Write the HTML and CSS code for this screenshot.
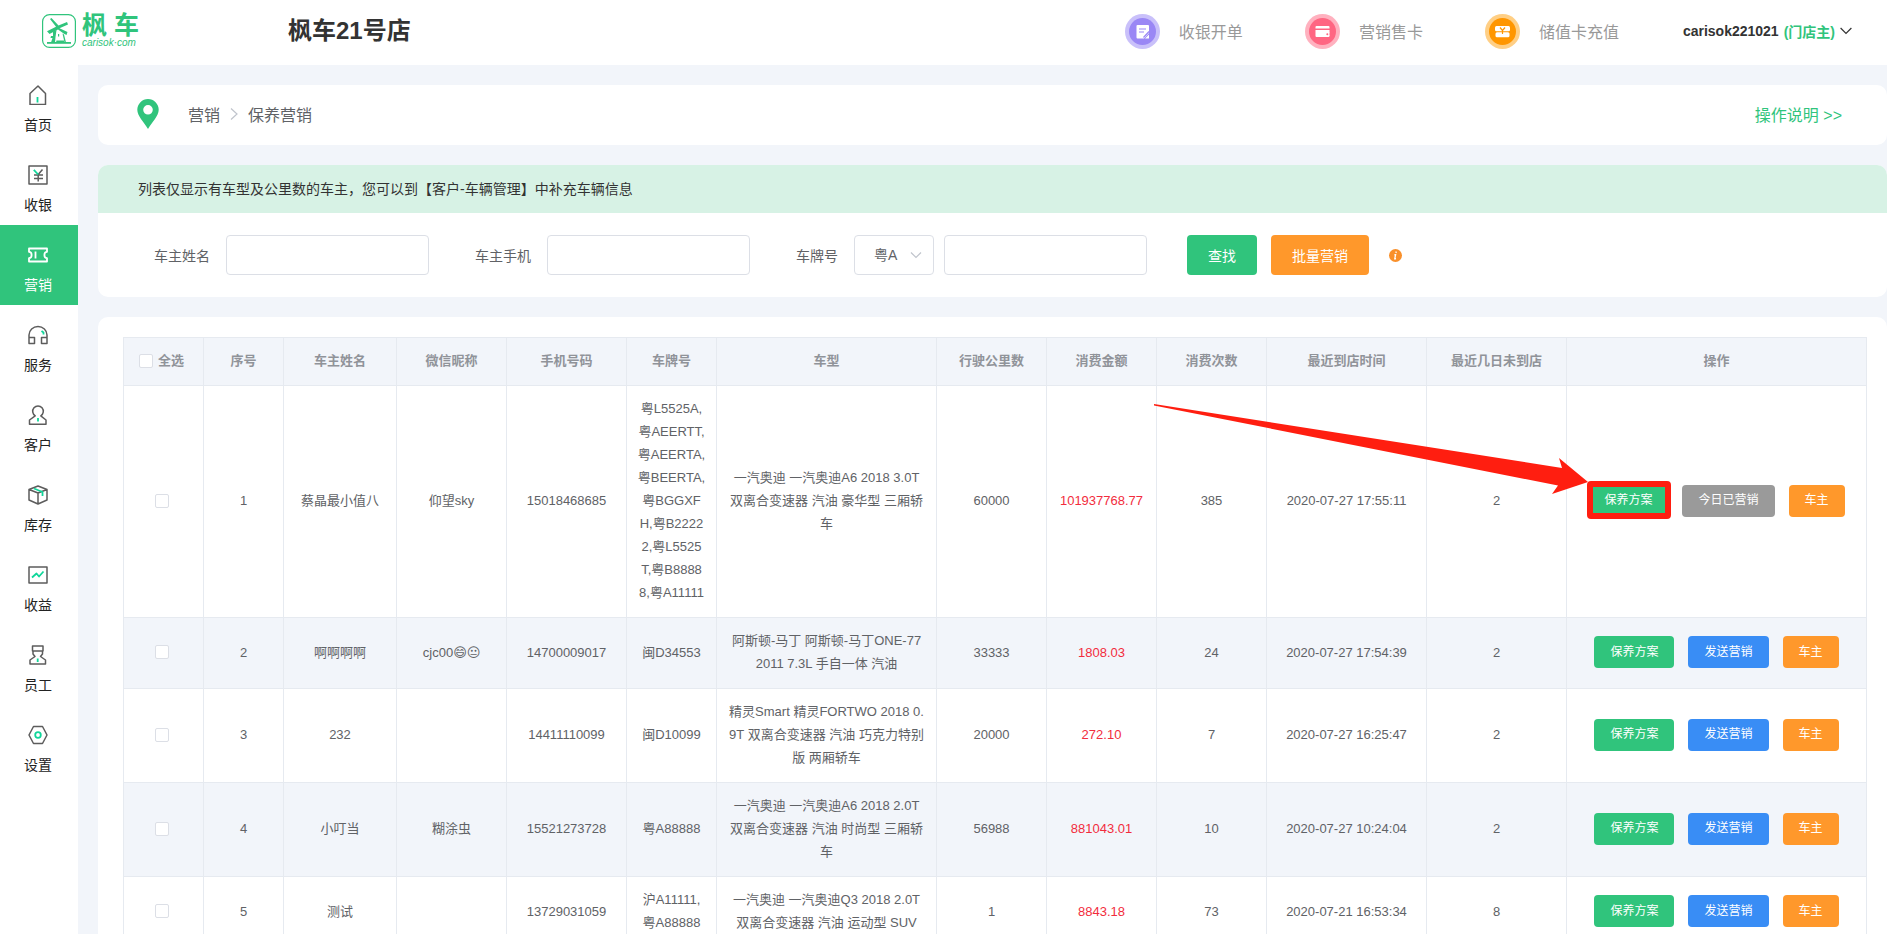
FILE: index.html
```html
<!DOCTYPE html>
<html lang="zh-CN">
<head>
<meta charset="utf-8">
<title>保养营销</title>
<link rel="stylesheet" href="styles.css">
</head>
<body>
<div class="app">
  <header class="topbar">
    <a class="logo" href="#">
      <svg class="logo-mark" viewBox="0 0 34 34" fill="#30c47c">
        <rect x="0.6" y="0.6" width="32.8" height="32.8" rx="7" fill="none" stroke="#30c47c" stroke-width="1.2"/>
        <path d="M8 5 L9.500 4 L16.500 11.500 L25 8 L26 10.500 L17.500 14.200 L25.500 18 L24.500 21 L22 19.800 L16 15.500 L7.500 20 L5 17.200 L14 12.700 Z"/>
        <path d="M11 17.500 L14.500 16 L13.500 23 L13 28.500 L9 28.500 L10.500 24 L8.500 24 L9 22 L11 22 Z"/>
        <path d="M20.500 19.500 L22 20.500 L24 28.500 L22.500 28.500 Z"/>
        <path d="M14 28.500 L14.500 26.500 L22 26.500 L22 28.500 Z"/>
        <path d="M5 28 H29 V29.800 H5 Z"/>
        <rect x="16" y="20" width="1.200" height="2.500"/>
      </svg>
      <span class="logo-words">
        <span class="logo-cn">枫<span>车</span></span>
        <span class="logo-en">carisok·com</span>
      </span>
    </a>
    <h1 class="shop">枫车21号店</h1>
    <nav class="quick">
      <a href="#"><svg class="round" viewBox="0 0 35 35"><circle cx="17.500" cy="17.500" r="17.500" fill="#c9c0fa"/><circle cx="17.500" cy="17.500" r="13.500" fill="#9a87f5"/><path d="M12.500 11h10.500q1 0 1 1v7l-5 5.500h-6.500q-1 0-1-1v-11.500q0-1 1-1z" fill="#fff"/><path d="M14 15h7M14 18h5M18.500 23.500l5.500-6" stroke="#9a87f5" stroke-width="1.200"/><path d="M20 24.500h4v-4z" fill="#fff"/></svg><span>收银开单</span></a>
      <a href="#"><svg class="round" viewBox="0 0 35 35"><circle cx="17.500" cy="17.500" r="17.500" fill="#ffb1bf"/><circle cx="17.500" cy="17.500" r="13.500" fill="#ff6682"/><path d="M11.500 12h12q1 0 1 1v1.500h-14v-1.500q0-1 1-1zM10.500 16h14v2.500h-4v3h4v0.500q0 1-1 1h-12q-1 0-1-1z" fill="#fff"/><rect x="20" y="18" width="4.500" height="4" fill="#fff"/><circle cx="22.300" cy="20.300" r="1" fill="#ff6682"/></svg><span>营销售卡</span></a>
      <a href="#"><svg class="round" viewBox="0 0 35 35"><circle cx="17.500" cy="17.500" r="17.500" fill="#ffcf85"/><circle cx="17.500" cy="17.500" r="13.500" fill="#ff9600"/><rect x="10" y="12" width="15" height="5.200" rx="1.500" fill="#fff"/><rect x="10.500" y="18.200" width="14" height="5" rx="1.500" fill="#fff"/><path d="M15 13.500l2.500 3 2.500-3M17.500 16.500v3.500" fill="none" stroke="#ff9600" stroke-width="1.200"/></svg><span>储值卡充值</span></a>
    </nav>
    <button class="account" type="button">carisok221021 <span class="role">(门店主)</span><svg class="caret" viewBox="0 0 10 10"><path d="M0.500 2.500 L5 7 L9.500 2.500" fill="none" stroke="#333"/></svg></button>
  </header>

  <nav class="sidebar">
    <a href="#"><svg viewBox="0 0 20 20"><path d="M2 8.500 L10 1 L17.500 8.500 V19.500 H2 Z"/><path class="hi" d="M9.500 12v5.500"/></svg>首页</a>
    <a href="#"><svg viewBox="0 0 20 20"><path d="M1 1h18v18H1zM6 10h9M6 13.500h9M10.200 9v7.500M10.200 9.500 L14.500 4.500"/><path class="hi" d="M5.800 4.800 L10.200 9.500"/></svg>收银</a>
    <a class="active" href="#"><svg viewBox="0 0 20 20"><path d="M1 3.500h18v3.300q-2.600 0-2.600 3.200t2.600 3.200v3.300H1v-3.300q2.600 0 2.600-3.200T1 6.800z"/><path class="hi" d="M7.500 6.500v7"/></svg>营销</a>
    <a href="#"><svg viewBox="0 0 20 20"><path d="M1 18v-8a9 8.500 0 0 1 18 0v8M1 12.500h5.500V18.500H1zM13.500 12.500H19V18.500h-5.500z"/><path class="hi" d="M13.500 6l2 1.500v2"/></svg>服务</a>
    <a href="#"><svg viewBox="0 0 20 20"><path d="M7.200 10.800a5.300 5.300 0 1 1 5.600 0l5.200 4.200v4.200H1.500v-4.200z"/><path class="hi" d="M10 13v3.500"/></svg>客户</a>
    <a href="#"><svg viewBox="0 0 20 20"><path d="M10 1l9 3.500v10.500l-9 4-9-4V4.500zM1 4.500l9 3.500 9-3.500M10 8v11"/><path class="hi" d="M6 3.500l8.500 3.500v4"/></svg>库存</a>
    <a href="#"><svg viewBox="0 0 20 20"><path d="M1 2h18v16H1z"/><path class="hi" d="M4 12.500l4.500-4 2.500 3 4.500-5"/></svg>收益</a>
    <a href="#"><svg viewBox="0 0 20 20"><path d="M4.500 1h10.500v5h-10.500zM5 6v3l2 2.500L2 15v4h15.500v-4l-5-3.500 2-2.500V6"/><path class="hi" d="M9.700 13.500v3.500"/></svg>员工</a>
    <a href="#"><svg viewBox="0 0 20 20"><path d="M5.500 1.500h9L19 10l-4.500 8.500h-9L1 10z"/><circle class="hi" cx="10" cy="10" r="2.800"/></svg>设置</a>
  </nav>

  <main class="main">
    <section class="card crumbs">
      <svg class="pin" viewBox="0 0 22 30"><path fill-rule="evenodd" fill="#30c47c" d="M11 0a10.700 10.700 0 0 1 10.700 10.700C21.700 17 15 23 11 30 7 23 0.300 17 0.300 10.700A10.700 10.700 0 0 1 11 0zm0 6a4.800 4.800 0 1 0 0 9.600A4.800 4.800 0 0 0 11 6z"/></svg>
      <a href="#">营销</a>
      <svg class="sep" viewBox="0 0 8 12"><path d="M1 0.500 L7 6 L1 11.500" fill="none" stroke="#c0c4cc" stroke-width="1.200"/></svg>
      <span>保养营销</span>
      <a class="help" href="#">操作说明 &gt;&gt;</a>
    </section>

    <section class="card">
      <p class="notice">列表仅显示有车型及公里数的车主，您可以到【客户-车辆管理】中补充车辆信息</p>
      <form class="filters">
        <div class="field"><label for="owner">车主姓名</label><input id="owner" type="text"></div>
        <div class="field"><label for="phone">车主手机</label><input id="phone" type="text"></div>
        <div class="field plate">
          <label for="plate">车牌号</label>
          <span class="region"><select aria-label="车牌归属地"><option>粤A</option></select><svg viewBox="0 0 12 12"><path d="M1 3.500 L6 8.500 L11 3.500" fill="none" stroke="#c0c4cc" stroke-width="1.200"/></svg></span>
          <input id="plate" type="text">
        </div>
        <button class="btn search" type="button">查找</button>
        <button class="btn bulk" type="button">批量营销</button>
        <svg class="info" viewBox="0 0 12 12"><circle cx="6" cy="6" r="6" fill="#f9902b"/><path d="M6.700 2.300l-0.300 1.400M5 5.300h1.100l-0.800 3.700h1.200" fill="none" stroke="#fff" stroke-width="1.200"/></svg>
      </form>
    </section>

    <section class="card list">
      <table class="grid">
        <colgroup><col class="w80"><col class="w80"><col class="w113"><col class="w110"><col class="w120"><col class="w90"><col class="w220"><col class="w110"><col class="w110"><col class="w110"><col class="w160"><col class="w140"><col></colgroup>
        <thead>
          <tr><th><label class="all"><input type="checkbox">全选</label></th><th>序号</th><th>车主姓名</th><th>微信昵称</th><th>手机号码</th><th>车牌号</th><th>车型</th><th>行驶公里数</th><th>消费金额</th><th>消费次数</th><th>最近到店时间</th><th>最近几日未到店</th><th>操作</th></tr>
        </thead>
        <tbody>
          <tr>
            <td><input type="checkbox" aria-label="选择 1"></td><td>1</td><td>蔡晶最小值八</td><td>仰望sky</td><td>15018468685</td>
            <td>粤L5525A,<br>粤AEERTT,<br>粤AEERTA,<br>粤BEERTA,<br>粤BGGXF<br>H,粤B2222<br>2,粤L5525<br>T,粤B8888<br>8,粤A11111</td>
            <td>一汽奥迪 一汽奥迪A6 2018 3.0T<br>双离合变速器 汽油 豪华型 三厢轿<br>车</td>
            <td>60000</td><td class="money">101937768.77</td><td>385</td><td>2020-07-27 17:55:11</td><td>2</td>
            <td><div class="ops"><span class="marked"><button class="btn small plan" type="button">保养方案</button><svg class="arrow" viewBox="0 0 434 92"><path fill="#ff1e10" d="M0 1 L408 65 L405 55 L434 79 L398 91 L404 82.500 L0 2.500 Z"/></svg></span><button class="btn small done" type="button">今日已营销</button><button class="btn small owner" type="button">车主</button></div></td>
          </tr>
          <tr>
            <td><input type="checkbox" aria-label="选择 2"></td><td>2</td><td>啊啊啊啊</td><td>cjc00<span class="emoji">😄😐</span></td><td>14700009017</td><td>闽D34553</td>
            <td>阿斯顿-马丁 阿斯顿-马丁ONE-77<br>2011 7.3L 手自一体 汽油</td>
            <td>33333</td><td class="money">1808.03</td><td>24</td><td>2020-07-27 17:54:39</td><td>2</td>
            <td><div class="ops"><button class="btn small plan" type="button">保养方案</button><button class="btn small send" type="button">发送营销</button><button class="btn small owner" type="button">车主</button></div></td>
          </tr>
          <tr>
            <td><input type="checkbox" aria-label="选择 3"></td><td>3</td><td>232</td><td></td><td>14411110099</td><td>闽D10099</td>
            <td>精灵Smart 精灵FORTWO 2018 0.<br>9T 双离合变速器 汽油 巧克力特别<br>版 两厢轿车</td>
            <td>20000</td><td class="money">272.10</td><td>7</td><td>2020-07-27 16:25:47</td><td>2</td>
            <td><div class="ops"><button class="btn small plan" type="button">保养方案</button><button class="btn small send" type="button">发送营销</button><button class="btn small owner" type="button">车主</button></div></td>
          </tr>
          <tr>
            <td><input type="checkbox" aria-label="选择 4"></td><td>4</td><td>小叮当</td><td>糊涂虫</td><td>15521273728</td><td>粤A88888</td>
            <td>一汽奥迪 一汽奥迪A6 2018 2.0T<br>双离合变速器 汽油 时尚型 三厢轿<br>车</td>
            <td>56988</td><td class="money">881043.01</td><td>10</td><td>2020-07-27 10:24:04</td><td>2</td>
            <td><div class="ops"><button class="btn small plan" type="button">保养方案</button><button class="btn small send" type="button">发送营销</button><button class="btn small owner" type="button">车主</button></div></td>
          </tr>
          <tr>
            <td><input type="checkbox" aria-label="选择 5"></td><td>5</td><td>测试</td><td></td><td>13729031059</td><td>沪A11111,<br>粤A88888</td>
            <td>一汽奥迪 一汽奥迪Q3 2018 2.0T<br>双离合变速器 汽油 运动型 SUV</td>
            <td>1</td><td class="money">8843.18</td><td>73</td><td>2020-07-21 16:53:34</td><td>8</td>
            <td><div class="ops"><button class="btn small plan" type="button">保养方案</button><button class="btn small send" type="button">发送营销</button><button class="btn small owner" type="button">车主</button></div></td>
          </tr>
        </tbody>
      </table>
    </section>
  </main>
</div>
</body>
</html>
```

FILE: styles.css
```css
* { box-sizing: border-box; }

body {
  margin: 0;
  font-family: "Liberation Sans", "Noto Sans CJK SC", sans-serif;
  font-size: 14px;
  color: #606266;
}

a { color: inherit; text-decoration: none; }
button, input, select { font: inherit; margin: 0; }

.app {
  display: grid;
  grid-template: 65px 1fr / 78px 1fr;
  height: 100vh;
  overflow: hidden;
  background: #f2f5fa;
}

/* Top bar */
.topbar {
  grid-column: 1 / -1;
  display: flex;
  align-items: center;
  padding: 0 35px 3px 42px;
  background: #fff;
}
.logo { display: flex; align-items: center; gap: 6px; width: 246px; color: #30c47c; }
.logo-mark { width: 34px; height: 34px; }
.logo-words { display: flex; flex-direction: column; }
.logo-cn { display: flex; gap: 7px; font-size: 25px; font-weight: 700; line-height: 24px; }
.logo-en { font-size: 10px; font-style: italic; line-height: 12px; }
.shop { margin: 0; font-size: 24px; line-height: 36px; color: #333; }
.quick { display: flex; gap: 62px; margin-left: auto; font-size: 16px; color: #999; }
.quick a { display: flex; align-items: center; gap: 19px; }
.round { width: 35px; height: 35px; }
.account {
  display: flex;
  align-items: center;
  margin-left: 64px;
  padding: 0;
  border: 0;
  background: none;
  font-weight: 700;
  color: #333;
}
.role { margin-left: 5px; color: #30c47c; }
.caret { width: 12px; height: 12px; margin-left: 5px; }

/* Side menu */
.sidebar { display: flex; flex-direction: column; background: #fff; }
.sidebar a {
  display: flex;
  flex-direction: column;
  align-items: center;
  gap: 10px;
  padding: 20px 2px 10px 0;
  line-height: 20px;
  color: #222;
}
.sidebar svg { width: 20px; height: 20px; fill: none; stroke: #5c5c5c; stroke-width: 1.5; stroke-linejoin: round; }
.sidebar .hi { stroke: #10d69a; stroke-width: 1.8; }
.sidebar .active { background: #30c47c; color: #fff; }
.sidebar .active svg, .sidebar .active .hi { stroke: #fff; stroke-width: 1.8; }

/* Content */
.main { display: flex; flex-direction: column; gap: 20px; min-width: 0; padding: 20px 0 0 20px; }
.card { flex: none; border-radius: 10px; background: #fff; }
.crumbs { display: flex; align-items: center; height: 60px; padding: 0 45px 2px 39px; font-size: 16px; }
.pin { width: 22px; height: 30px; margin-right: 29px; }
.sep { width: 8px; height: 12px; margin: 0 10px; }
.help { margin-left: auto; color: #30c47c; }

.notice {
  margin: 0;
  padding: 12px 40px;
  border-radius: 10px 10px 0 0;
  background: #d7f2e5;
  line-height: 24px;
  color: #333;
}
.filters { display: flex; align-items: center; padding: 22px 56px; }
.field { display: flex; align-items: center; margin-right: 46px; }
.field label { margin-right: 16px; }
.field input, .field select {
  height: 40px;
  border: 1px solid #dcdfe6;
  border-radius: 4px;
  background: #fff;
  color: #606266;
}
.field input { width: 203px; padding: 0 15px; }
.plate { margin-right: 40px; }
.region { display: flex; position: relative; margin-right: 10px; }
.region select { width: 80px; padding: 0 19px; appearance: none; }
.region svg { position: absolute; right: 12px; top: 14px; width: 12px; height: 12px; pointer-events: none; }
.info { width: 13px; height: 13px; margin-left: 20px; }

.btn { height: 40px; padding: 0 21px; border: 0; border-radius: 4px; color: #fff; white-space: nowrap; }
.search { margin-right: 14px; background: #30c47c; }
.bulk { background: #ff982b; }
.small { height: 32px; padding: 0 16px; font-size: 12px; }
.plan { background: #30c47c; }
.send { background: #398df5; }
.done { background: #9a9a9a; }
.owner { background: #ff982b; }

/* List */
.list { padding: 20px 20px 20px 25px; }
.grid {
  width: 100%;
  table-layout: fixed;
  border-collapse: separate;
  border-spacing: 0;
  border: solid #e6eaf0;
  border-width: 1px 0 0 1px;
  font-size: 13px;
  line-height: 23px;
}
.grid th, .grid td {
  padding: 11px 0 13px;
  border: solid #e6eaf0;
  border-width: 0 1px 1px 0;
  text-align: center;
  vertical-align: middle;
  white-space: nowrap;
}
.grid th:first-child, .grid td:first-child { padding-right: 4px; }
.grid th { background: #f2f5fa; color: #909399; }
.grid tbody tr:nth-child(even) { background: #f2f5fa; }
.grid .money { color: #f22c3d; }
.grid input {
  display: block;
  width: 14px;
  height: 14px;
  margin: 0 auto;
  border: 1px solid #dcdfe6;
  border-radius: 2px;
  background: #fff;
  appearance: none;
}
.all { display: flex; align-items: center; justify-content: center; gap: 5px; }
.grid .all input { margin: 0; }
.emoji { font-family: "DejaVu Sans", sans-serif; line-height: 1; }

.w80 { width: 80px; }
.w90 { width: 90px; }
.w110 { width: 110px; }
.w113 { width: 113px; }
.w120 { width: 120px; }
.w140 { width: 140px; }
.w160 { width: 160px; }
.w220 { width: 220px; }

.ops { display: flex; justify-content: center; gap: 14px; }
.marked { position: relative; display: flex; }
.marked::after {
  content: "";
  position: absolute;
  inset: -4px -3px -2px -1px;
  border: 6px solid #ff1e10;
  border-radius: 4px;
  pointer-events: none;
}
.arrow { position: absolute; right: 100%; top: -82px; width: 434px; height: 92px; pointer-events: none; }
```
